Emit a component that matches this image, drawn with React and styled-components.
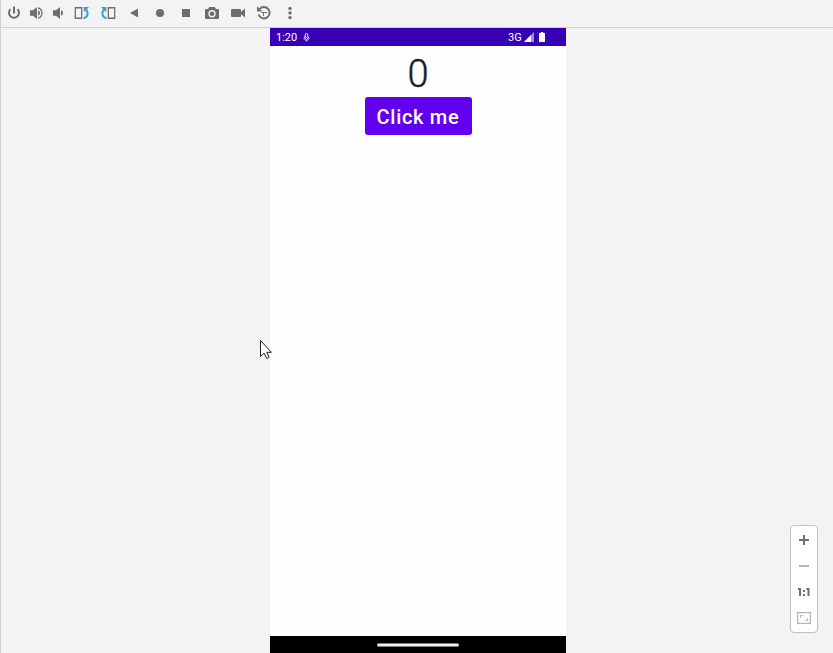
import React, { useState } from "react";
import styled, { createGlobalStyle } from "styled-components";

const GlobalStyle = createGlobalStyle`
  body { margin: 0; background: #f3f3f3; }
  *, *::before, *::after { box-sizing: border-box; }
`;

const Window = styled.main`
  position: relative;
  display: flex;
  flex-direction: column;
  width: 833px;
  height: 653px;
  overflow: hidden;
  background: #f3f3f3;
  border-left: 1px solid #d1d1d1;
  font-family: Roboto, sans-serif;
`;

const Toolbar = styled.header`
  display: flex;
  height: 28px;
  flex: none;
  padding: 0 0 1px 2px;
  border-bottom: 1px solid #d1d1d1;
`;

const Tool = styled.span`
  display: flex;
  align-items: center;
  justify-content: center;
  width: ${(p) => p.$width}px;
`;

const Icon = styled.svg`
  display: block;
  flex: none;
  color: #6e6e6e;
  fill: currentColor;
`;

const Stage = styled.div`
  display: flex;
  flex: 1;
  padding-left: 269px;
`;

const Phone = styled.section`
  display: flex;
  flex-direction: column;
  width: 296px;
  background: #fefefe;
`;

const StatusBar = styled.div`
  display: flex;
  align-items: center;
  height: 18px;
  padding: 0 21px 0 6px;
  background: #3700b3;
  color: #fff;
  font-size: 11px;
  line-height: 18px;
`;

const Clock = styled.span`
  width: 27px;
  padding-top: 1px;
  line-height: 17px;
  font-weight: 400;
`;

const Network = styled.span`
  margin-left: auto;
  margin-right: 2px;
  padding-top: 1px;
  line-height: 17px;
  font-weight: 400;
  letter-spacing: 0.2px;
`;

const StatusIcon = styled(Icon)`
  color: #fff;
  margin-left: ${(p) => p.$gap || 0}px;
`;

const Content = styled.div`
  display: flex;
  flex: 1;
  flex-direction: column;
  align-items: center;
`;

const Count = styled.div`
  height: 51px;
  font-size: 38px;
  font-weight: 300;
  line-height: 56px;
  color: #1c1c1c;
  -webkit-text-stroke: 0.4px #1c1c1c;
`;

const ClickButton = styled.button`
  width: 107px;
  height: 38px;
  padding: 0;
  border: 0;
  border-radius: 3px;
  background: #6200ee;
  color: #fff;
  font: 500 20px/40px Roboto, sans-serif;
  letter-spacing: 0.7px;
`;

const NavBar = styled.div`
  display: flex;
  align-items: center;
  justify-content: center;
  height: 17px;
  padding-top: 1px;
  background: #000;
`;

const Handle = styled.span`
  width: 82px;
  height: 4px;
  border: solid #807c80;
  border-width: 1px 0;
  border-radius: 2px;
  background: #eee;
`;

const ZoomPanel = styled.aside`
  position: absolute;
  right: 15px;
  bottom: 20px;
  display: flex;
  flex-direction: column;
  align-items: center;
  width: 28px;
  height: 108px;
  padding: 1px 0;
  border: 1px solid #c0c0c0;
  border-radius: 4px;
  background: #fff;
`;

const ZoomItem = styled.span`
  display: flex;
  align-items: center;
  justify-content: center;
  height: 26px;
`;

const Cursor = styled.svg`
  position: absolute;
  left: 258px;
  top: 339px;
`;

const blue = "#389fd6";

const tools = [
  { id: "power", width: 22, art: <>
    <path d="M4.5 4.1A5 5 0 1 0 11.5 4.1" fill="none" stroke="currentColor" strokeWidth="2" />
    <path d="M7 1.5h2v7H7z" />
  </> },
  { id: "volume-up", width: 22, art: <>
    <path d="M2 5.3h3L9 2v12L5 10.7H2z" />
    <path d="M10 5.3a2.8 2.8 0 0 1 0 5.4z" />
    <path d="M10 2.8a5.4 5.4 0 0 1 0 10.4" fill="none" stroke="currentColor" strokeWidth="1.3" />
  </> },
  { id: "volume-down", width: 22, art: <>
    <path d="M3 5.3h3L10 2v12l-4-3.3H3z" />
    <path d="M11 5.3a2.8 2.8 0 0 1 0 5.4z" />
  </> },
  { id: "rotate-left", width: 26, art: <>
    <path d="M0.7 2h7.6v12H0.7zm1.3 1.5v9h5v-9z" fillRule="evenodd" />
    <path d="M9.5 13.4C14 12 14.8 8.3 12.3 4.5" fill="none" stroke={blue} strokeWidth="2" />
    <path d="M9.5 2H15L10 7.2z" fill={blue} />
  </> },
  { id: "rotate-right", width: 26, art: <>
    <path d="M7.7 2h7.6v12H7.7zM9 3.5v9h5v-9z" fillRule="evenodd" />
    <path d="M6.5 13.4C2 12 1.2 8.3 3.7 4.5" fill="none" stroke={blue} strokeWidth="2" />
    <path d="M6.5 2H1l5 5.2z" fill={blue} />
  </> },
  { id: "back", width: 26, art: <path d="M4 8l8-4.5v9z" /> },
  { id: "home", width: 26, art: <circle cx="8" cy="8" r="4.1" /> },
  { id: "overview", width: 26, art: <path d="M4 4h8v8H4z" /> },
  { id: "camera", width: 26, art: <>
    <path fillRule="evenodd" d="M5.3 2h5.4L12 4h2q1 0 1 1v8q0 1-1 1H2q-1 0-1-1V5q0-1 1-1h2zM8 5a3.7 3.7 0 1 0 0 7.4A3.7 3.7 0 1 0 8 5z" />
    <circle cx="8" cy="8.7" r="2.3" />
  </> },
  { id: "record", width: 26, art: <path d="M2 4h8q1 0 1 1v1.7L15 3.5v9L11 9.3V11q0 1-1 1H2q-1 0-1-1V5q0-1 1-1z" /> },
  { id: "snapshots", width: 26, art: <>
    <path d="M2.6 9.7a5.7 5.7 0 1 0 1-5.7" fill="none" stroke="currentColor" strokeWidth="1.9" />
    <path d="M1 1.2v5.3h5.5z" />
    <path d="M7.5 11V7.5M5.5 7.5H11" fill="none" stroke="currentColor" strokeWidth="1.1" />
  </> },
  { id: "more", width: 26, art: <>
    <circle cx="8" cy="3.4" r="1.7" /><circle cx="8" cy="8" r="1.7" /><circle cx="8" cy="12.6" r="1.7" />
  </> },
];

export default function App() {
  const [count, setCount] = useState(0);
  return (
    <Window>
      <GlobalStyle />
      <Toolbar>
        {tools.map((t) => (
          <Tool key={t.id} $width={t.width}>
            <Icon width="16" height="16" viewBox="0 0 16 16">{t.art}</Icon>
          </Tool>
        ))}
      </Toolbar>
      <Stage>
        <Phone>
          <StatusBar>
            <Clock>1:20</Clock>
            <StatusIcon width="7" height="9" viewBox="0 0 7 9">
              <g fill="none" stroke="currentColor" strokeWidth="0.9">
                <rect x="2.2" y="0.5" width="2.6" height="4" rx="1.3" />
                <path d="M2 3.5L1 5.5 3.5 8.2 6 5.5 5 3.5M2.3 5.4l1.2 1 1.2-1" />
              </g>
            </StatusIcon>
            <Network>3G</Network>
            <StatusIcon width="10" height="10" viewBox="0 0 10 10">
              <path d="M0 10L10 0v10z" opacity="0.55" />
              <path d="M0 10L7 3v7z" />
            </StatusIcon>
            <StatusIcon $gap={5} width="6" height="10" viewBox="0 0 6 10">
              <path d="M1.8 0h2.4v1H6v9H0V1h1.8z" />
            </StatusIcon>
          </StatusBar>
          <Content>
            <Count>{count}</Count>
            <ClickButton onClick={() => setCount(count + 1)}>Click me</ClickButton>
          </Content>
          <NavBar><Handle /></NavBar>
        </Phone>
      </Stage>
      <ZoomPanel>
        <ZoomItem>
          <Icon width="16" height="16" viewBox="0 0 16 16"><path d="M7 3h2v4h4v2H9v4H7V9H3V7h4z" /></Icon>
        </ZoomItem>
        <ZoomItem>
          <Icon width="16" height="16" viewBox="0 0 16 16"><path d="M3 7h10v2H3z" fill="#b7b7b7" /></Icon>
        </ZoomItem>
        <ZoomItem>
          <Icon width="16" height="16" viewBox="0 0 16 16">
            <path d="M2 4h3v8H3V6H2zM10.5 4h3v8h-2V6h-1zM7 6h2v2H7zM7 10h2v2H7z" />
          </Icon>
        </ZoomItem>
        <ZoomItem>
          <Icon width="16" height="16" viewBox="0 0 16 16">
            <g fill="none" stroke="#b7b7b7" strokeWidth="1.3">
              <rect x="1.6" y="2.6" width="12.8" height="10.8" />
              <path d="M4.5 8V5.5H7M11.5 8v2.5H9" strokeWidth="1" />
            </g>
          </Icon>
        </ZoomItem>
      </ZoomPanel>
      <Cursor width="14" height="22" viewBox="0 0 14 22">
        <path d="M1.5 1.5v16l3.6-3.4 2.6 5.2q1.8.2 2.3-1.2l-2.2-4.8h4.6z" fill="#fff" stroke="#1a1a2a" />
      </Cursor>
    </Window>
  );
}
